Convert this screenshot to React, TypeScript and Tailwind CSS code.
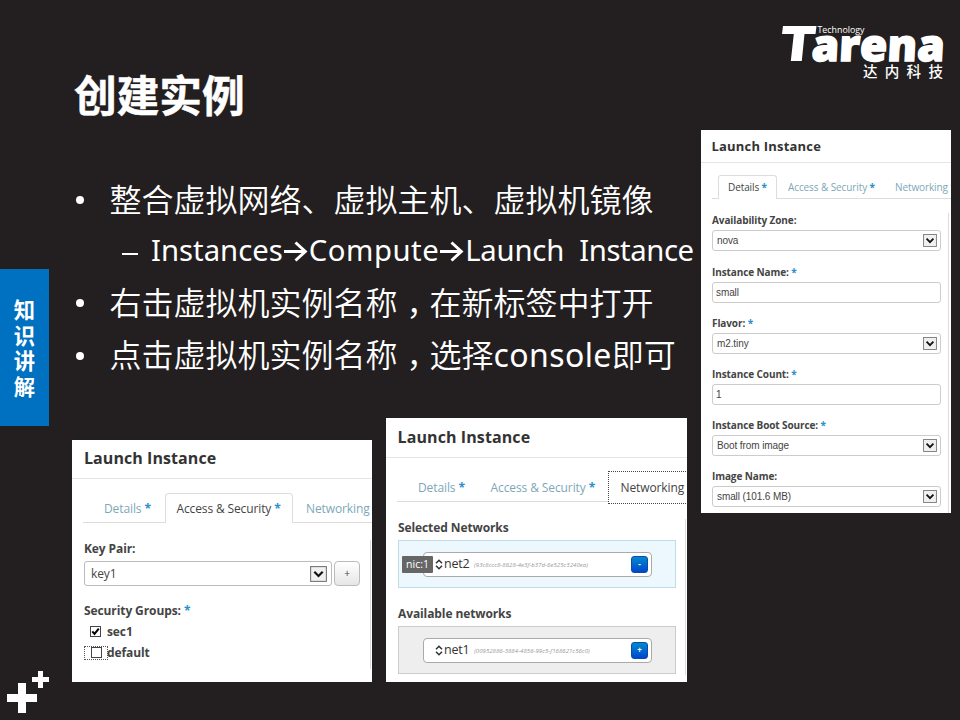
import React from "react";

const Star = () => <span className="font-bold text-[#2a8fc9]">*</span>;

const Arrow = () => (
  <svg className="inline-block h-[21px] w-[26px] align-[-1px]" viewBox="0 0 26 21" fill="none" stroke="white">
    <path d="M1 10.5H23" strokeWidth="3" />
    <path d="M12.5 1.5L22.3 10.5L12.5 19.5" strokeWidth="3" />
  </svg>
);

const DropArrow = ({ small = false }: { small?: boolean }) => (
  <svg className={small ? "h-[13px] w-[14px] shrink-0" : "h-4 w-[17px] shrink-0"} viewBox="0 0 17 16" fill="none">
    <rect x="0.6" y="0.6" width="15.8" height="14.8" fill="#f0f0f0" stroke="#777" strokeWidth="1.1" />
    <path d="M4.3 5.7L8.5 10L12.7 5.7" stroke="#111" strokeWidth="2.2" />
  </svg>
);

const Comma = () => <span className="inline-block w-8 pl-[9px] [font-feature-settings:'halt']">，</span>;

const Bullet = ({ children, className }: { children: React.ReactNode; className: string }) => (
  <li className={`flex items-center ${className}`}>
    <span className="ml-1 mr-[25.5px] size-2 shrink-0 rounded-full bg-white" />
    <span className="pb-1 whitespace-nowrap">{children}</span>
  </li>
);

const Field = ({ label, value, required, select }: { label: string; value: string; required?: boolean; select?: boolean }) => (
  <div className="h-[51.2px]">
    <div className="h-[17px] text-[10px] leading-[15px] font-bold tracking-[-0.1px] whitespace-nowrap text-[#444]">
      {label} {required && <Star />}
    </div>
    <div className={`flex h-[21px] w-[229px] items-center justify-between rounded-[3px] border border-[#ccc] pr-[3px] font-['Liberation_Sans',sans-serif] text-[10px] tracking-[-0.1px] text-[#444] ${select ? "pl-1" : "pl-[3px]"}`}>
      <span>{value}</span>
      {select && <DropArrow small />}
    </div>
  </div>
);

const Network = ({ name, id, sign, nic }: { name: string; id: string; sign: string; nic?: string }) => (
  <div className={`relative flex h-12 w-[278px] items-center border pl-6 ${nic ? "border-[#bedde8] bg-[#edf8fe]" : "border-[#ccc] bg-[#eee]"}`}>
    <div className="flex h-[25px] w-[229px] items-center rounded-[4px] border border-[#aaa] bg-white pr-[3px] pl-[11px]">
      <svg className="h-[11px] w-2 shrink-0" viewBox="0 0 8 11" fill="none" stroke="#333" strokeWidth="1.5">
        <path d="M1 4.2L4 1.2L7 4.2M1 6.8L4 9.8L7 6.8" />
      </svg>
      <span className="ml-[1px] w-[30px] text-[12.5px] tracking-[-0.2px] text-[#333]">{name}</span>
      <span className="flex-1 pt-[3px] text-[6px] tracking-[0.06px] whitespace-nowrap text-[#999] italic">({id})</span>
      <span className="flex h-[17px] w-[17px] items-center justify-center rounded-[3px] border border-[#0a4cae] bg-linear-to-b from-[#0088cc] to-[#0044cc] text-[8px] leading-none font-bold text-white">{sign}</span>
    </div>
    {nic && (
      <span className="absolute top-[15px] left-[3px] flex h-[17px] w-[31px] items-center justify-center rounded-[1px] bg-[#666] text-[10.5px] whitespace-nowrap text-white">{nic}</span>
    )}
  </div>
);

const Rail = () => (
  <aside className="flex h-[720px] w-[72px] shrink-0 flex-col pt-[269px]">
    <div className="flex h-[157px] w-[49px] flex-col items-center bg-[#0070c0] pt-[27px] font-['Noto_Sans_CJK_SC',sans-serif] text-[21.3px] leading-[25.6px] font-bold text-white">
      <span>知</span><span>识</span><span>讲</span><span>解</span>
    </div>
    <svg className="mt-[244px] ml-[6px] h-[44px] w-[44px]" viewBox="0 0 44 44" fill="#fff">
      <path d="M12 13h8v11h11v8h-11v11h-8v-11h-11v-8h11z" />
      <path d="M32 1h5v6h6v5h-6v6h-5v-6h-6v-5h6z" />
    </svg>
  </aside>
);

const Logo = () => (
  <svg className="mt-[10px] ml-[80px] h-[82px] w-[166px] overflow-visible" viewBox="781 10 166 82" fill="white">
    <path d="M783 26H816.5L815.5 34H804.5L801.8 61H790.8L793.8 34H782Z" />
    <text transform="translate(811 60.5) skewX(-3)" className="font-['Open_Sans',sans-serif] font-extrabold" fontSize="44" textLength="133" lengthAdjust="spacingAndGlyphs" stroke="white" strokeWidth="1.5">arena</text>
    <text x="817.5" y="32.5" className="font-['Open_Sans',sans-serif]" fontSize="9" textLength="47" lengthAdjust="spacingAndGlyphs">Technology</text>
    <text x="863" y="77" className="font-['Noto_Sans_CJK_SC',sans-serif] font-medium" fontSize="14.5" letterSpacing="7.3">达内科技</text>
  </svg>
);

const KeyPanel = () => (
  <section className="h-[242px] w-[300px] shrink-0 overflow-hidden bg-white">
    <h2 className="h-[39px] border-b border-[#e5e5e5] pl-[12px] text-[16px] leading-[37px] font-bold tracking-[0.07px] text-[#333]">Launch Instance</h2>
    <div className="mt-[14px] ml-[11px] flex h-[30px] text-[12px] leading-[32px] tracking-[-0.1px] whitespace-nowrap text-[#7ea7b8]">
      <div className="w-[82px] shrink-0 border-b border-[#ddd] pl-[21px]">Details <Star /></div>
      <div className="w-[128px] shrink-0 rounded-t-[4px] border border-b-0 border-[#ddd] pl-[10.5px] leading-[30px] tracking-[-0.13px] text-[#444]">Access &amp; Security <Star /></div>
      <div className="w-20 shrink-0 border-b border-[#ddd] pl-[13px]">Networking</div>
    </div>
    <div className="mt-[17px] ml-3 h-[129px] w-[287px] border-r border-[#ddd] text-[12px] font-bold tracking-[-0.1px] text-[#444]">
      <div className="h-[21px] leading-[18px]">Key Pair:</div>
      <div className="flex gap-[2px]">
        <div className="flex h-[25px] w-[248px] items-center justify-between rounded-[3px] border border-[#bbb] pr-[4px] pl-[6px] font-normal">
          <span>key1</span><DropArrow />
        </div>
        <div className="flex h-[25px] w-[26px] items-center justify-center rounded-[4px] border border-[#bbb] bg-linear-to-b from-white to-[#e6e6e6] text-[10px] font-normal">+</div>
      </div>
      <div className="mt-[15px] h-[20px] leading-[20px]">Security Groups: <Star /></div>
      <div className="flex h-[21px] items-center gap-[6px] pl-[6px]">
        <svg className="size-[11px]" viewBox="0 0 11 11" fill="none"><rect x="0.5" y="0.5" width="10" height="10" stroke="#444" /><path d="M2.3 5.3L4.5 7.9L8.8 2.6" stroke="#000" strokeWidth="2" /></svg>
        <span>sec1</span>
      </div>
      <div className="flex h-[21px] items-center">
        <span className="flex h-[14px] w-[24px] items-center justify-center border border-dotted border-[#555]"><span className="size-[11px] border border-[#444]" /></span>
        <span className="-ml-[1px]">default</span>
      </div>
    </div>
  </section>
);

const NetworkPanel = () => (
  <section className="h-[264px] w-[301px] shrink-0 overflow-hidden bg-white">
    <h2 className="h-10 border-b border-[#e5e5e5] pl-[11.5px] text-[16px] leading-[38px] font-bold tracking-[0.1px] text-[#333]">Launch Instance</h2>
    <div className="mt-[13px] ml-[11px] flex h-[32px] items-start text-[12px] leading-[34px] tracking-[-0.1px] whitespace-nowrap text-[#7ea7b8]">
      <div className="flex h-[31px] w-[211px] shrink-0 border-b border-[#ddd] pl-[21px]">
        <span className="w-[72.5px]">Details <Star /></span>
        <span className="tracking-[-0.1px]">Access &amp; Security <Star /></span>
      </div>
      <div className="h-[33px] w-[90px] shrink-0 border border-dotted border-[#444] pl-[11.5px] leading-[32px] text-[#444]">Networking</div>
    </div>
    <div className="mt-[16px] ml-3 h-[156px] w-[288px] border-r border-[#ddd] text-[12px] text-[#444]">
      <div className="h-[21px] leading-[18px] font-bold tracking-[-0.1px]">Selected Networks</div>
      <Network name="net2" id="93c8ccc8-8628-4e3f-b37d-6e525c3240ea" sign="-" nic="nic:1" />
      <div className="mt-[17px] h-[21px] leading-[17px] font-bold tracking-[-0.1px]">Available networks</div>
      <Network name="net1" id="00952886-3884-4856-99c5-f168621c56c0" sign="+" />
    </div>
  </section>
);

const DetailsPanel = () => (
  <section className="h-[383px] w-[250px] overflow-hidden bg-white">
    <h2 className="h-[33px] border-b border-[#e5e5e5] pl-[10.5px] text-[13px] leading-[32px] font-bold tracking-[0.2px] text-[#333]">Launch Instance</h2>
    <div className="mt-[12px] ml-[11px] flex h-[24px] text-[10px] leading-[25px] tracking-[-0.1px] whitespace-nowrap text-[#7ea7b8]">
      <div className="w-[6px] shrink-0 border-b border-[#ddd]" />
      <div className="w-[59px] shrink-0 rounded-t-[3px] border border-b-0 border-[#ddd] pl-[9px] leading-[23px] text-[#444]">Details <Star /></div>
      <div className="w-[118px] shrink-0 border-b border-[#ddd] pl-[11px]">Access &amp; Security <Star /></div>
      <div className="w-[70px] shrink-0 border-b border-[#ddd]">Networking <Star /></div>
    </div>
    <div className="mt-[14px] ml-[11px] h-[300px] w-[237px] border-r border-[#ddd] pt-[0.4px]">
      <Field label="Availability Zone:" value="nova" select />
      <Field label="Instance Name:" value="small" required />
      <Field label="Flavor:" value="m2.tiny" required select />
      <Field label="Instance Count:" value="1" required />
      <Field label="Instance Boot Source:" value="Boot from image" required select />
      <Field label="Image Name:" value="small (101.6 MB)" select />
    </div>
  </section>
);

export default function App() {
  return (
    <div className="flex h-[720px] w-[960px] overflow-hidden bg-[#231f20] font-['Open_Sans','Noto_Sans_CJK_SC',sans-serif]">
      <Rail />
      <main className="flex w-[629px] shrink-0 flex-col">
        <h1 className="mt-[61px] h-[64px] pl-[2px] font-['Noto_Sans_CJK_SC',sans-serif] text-[42.7px] leading-[64px] font-bold text-white [-webkit-text-stroke:0.5px_white]">创建实例</h1>
        <ul className="mt-[49px] h-[244px] font-['Noto_Sans_CJK_SC',sans-serif] text-[32px] font-[350] text-white">
          <Bullet className="h-[52px]">整合虚拟网络、虚拟主机、虚拟机镜像</Bullet>
          <li className="flex h-[50px] items-center pl-[50px] font-['Noto_Sans',sans-serif] text-[29.3px] font-normal whitespace-nowrap">
            <span className="mt-[5px] mr-[13px] h-[2px] w-4 bg-white" />
            <span className="pb-[1px]">Instances<Arrow /><span className="tracking-[0.5px]">Compute</span><Arrow /><span className="tracking-[-0.2px]">Launch</span><span className="inline-block w-[15px]" /><span className="tracking-[-0.4px]">Instance</span></span>
          </li>
          <Bullet className="h-[53px]">右击虚拟机实例名称<Comma />在新标签中打开</Bullet>
          <Bullet className="h-[53px]">点击虚拟机实例名称<Comma />选择<span className="font-['Noto_Sans',sans-serif] font-normal tracking-[0.4px]">console</span>即可</Bullet>
        </ul>
        <div className="flex items-end gap-[14px]">
          <KeyPanel />
          <NetworkPanel />
        </div>
      </main>
      <div className="flex w-[250px] shrink-0 flex-col">
        <Logo />
        <div className="mt-[38px]"><DetailsPanel /></div>
      </div>
    </div>
  );
}
